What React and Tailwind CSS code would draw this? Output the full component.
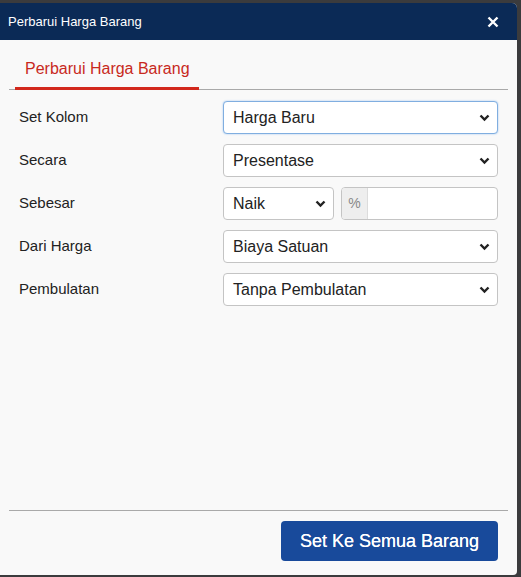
import React from "react";

const Chevron = () => (
  <svg width="11" height="8" viewBox="0 0 11 8" className="shrink-0">
    <path d="M1.5 1.5 L5.5 5.5 L9.5 1.5" fill="none" stroke="#222" strokeWidth="2.4" />
  </svg>
);

const Select = ({ value, focused, className = "" }) => (
  <div
    className={`h-[33px] flex items-center justify-between pl-[9px] pr-[7px] rounded-[4px] bg-white text-[16px] text-[#222] border ${
      focused ? "border-[#80aee0] shadow-[0_0_2px_#9cc3ee]" : "border-[#c4c4c4]"
    } ${className}`}
  >
    <span>{value}</span>
    <Chevron />
  </div>
);

const ROWS = [
  { label: "Set Kolom", value: "Harga Baru", focused: true },
  { label: "Secara", value: "Presentase" },
  { label: "Sebesar", custom: true },
  { label: "Dari Harga", value: "Biaya Satuan" },
  { label: "Pembulatan", value: "Tanpa Pembulatan" },
];

export default function App() {
  return (
    <div
      className="w-[521px] h-[577px] bg-[#3b3b3d] pt-[3px] pr-[4px] pb-[2px] overflow-hidden"
      style={{ fontFamily: '"Liberation Sans", Arial, sans-serif' }}
    >
      <div className="h-full flex flex-col bg-[#f9f9f9] rounded-tr-[5px] rounded-br-[4px] overflow-hidden">
        {/* header */}
        <div className="h-[37px] shrink-0 bg-[#0b2a56] flex items-center justify-between pl-[8px] pr-[18px]">
          <span className="text-white text-[13px]">Perbarui Harga Barang</span>
          <svg width="12" height="12" viewBox="0 0 12 12">
            <path d="M1.5 1.5 L10.5 10.5 M10.5 1.5 L1.5 10.5" stroke="#fff" strokeWidth="2.4" />
          </svg>
        </div>

        {/* tabs */}
        <div className="mx-[9px] mt-[20px] h-[30px] border-b border-[#a9a9a9] flex">
          <div className="ml-[6px] w-[184px] border-b-[3px] border-[#d2281c] -mb-px pl-[10px] text-[16px] text-[#c8291d] leading-[18px]">
            Perbarui Harga Barang
          </div>
        </div>

        {/* form */}
        <div className="flex-1 flex flex-col gap-[10px] pt-[11px] pl-[19px] pr-[19px]">
          {ROWS.map((r) => (
            <div key={r.label} className="flex items-center h-[33px]">
              <div className="w-[204px] text-[15px] text-[#222]">{r.label}</div>
              {r.custom ? (
                <div className="flex-1 flex gap-[7px]">
                  <Select value="Naik" className="w-[111px]" />
                  <div className="flex-1 h-[33px] flex rounded-[4px] border border-[#c4c4c4] bg-white overflow-hidden">
                    <div className="w-[26px] bg-[#eeeeee] border-r border-[#dcdcdc] flex items-center justify-center text-[14px] text-[#888]">
                      %
                    </div>
                  </div>
                </div>
              ) : (
                <Select value={r.value} focused={r.focused} className="flex-1" />
              )}
            </div>
          ))}
        </div>

        {/* footer */}
        <div className="mx-[9px] border-t border-[#a9a9a9] h-[65px] shrink-0 flex justify-end items-start pt-[10px] pr-[10px]">
          <button className="w-[217px] h-[40px] rounded-[4px] bg-[#184a9b] text-white text-[18px] [text-shadow:0_0_0.4px_#fff]">
            Set Ke Semua Barang
          </button>
        </div>
      </div>
    </div>
  );
}
